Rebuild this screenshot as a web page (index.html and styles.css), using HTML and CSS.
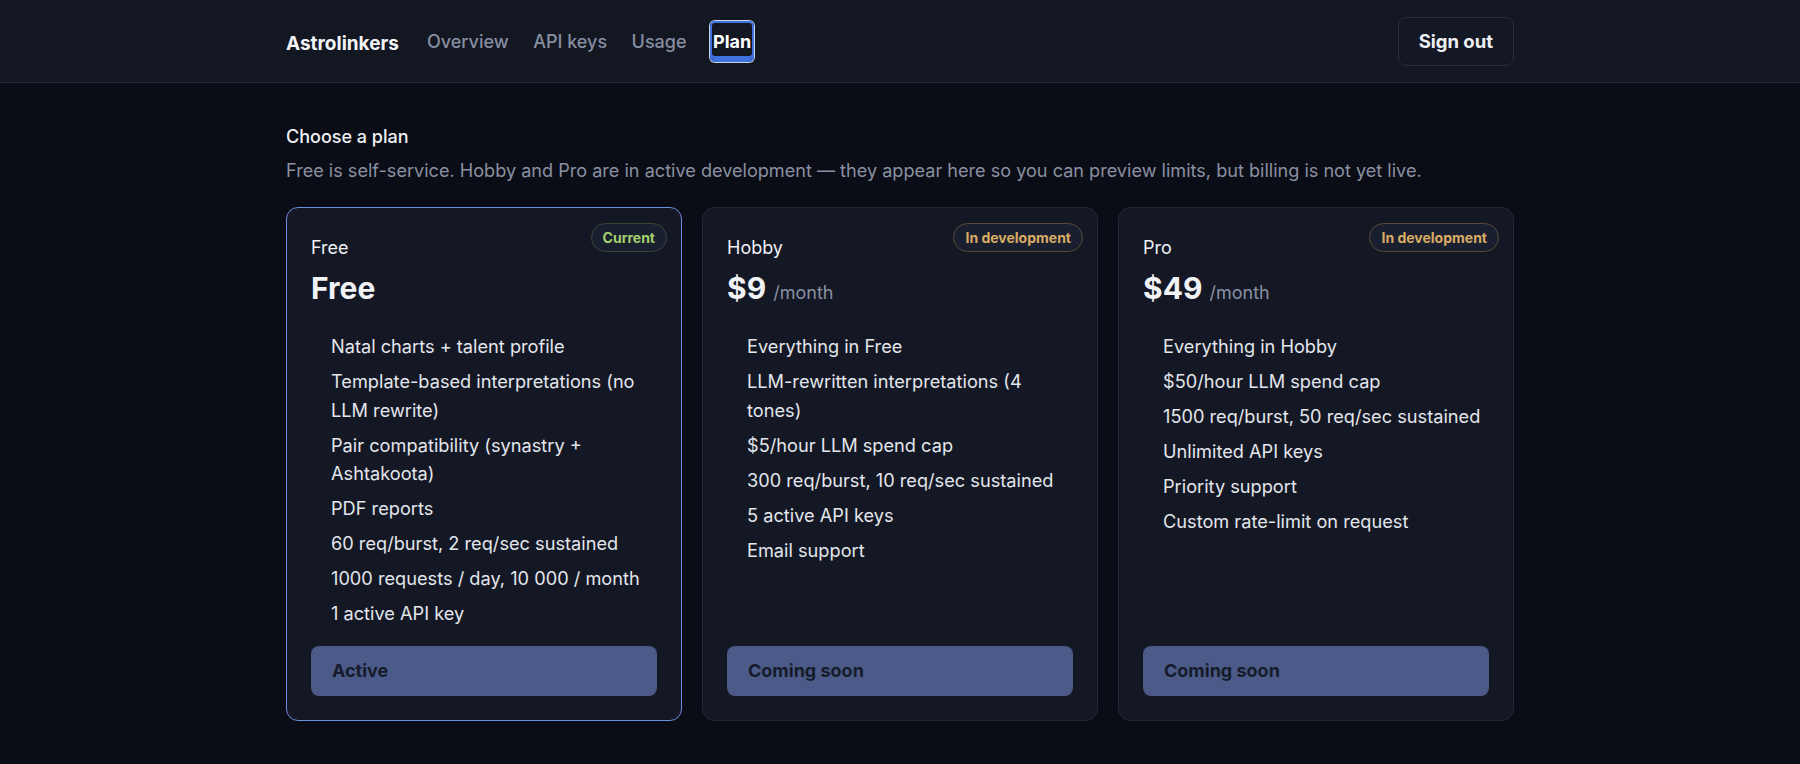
FILE: index.html
```html
<!DOCTYPE html>
<html lang="en">
<head>
    <meta charset="UTF-8">
    <meta name="viewport" content="width=device-width, initial-scale=1.0">
    <title>Plan - Astrolinkers</title>
    <link rel="stylesheet" href="styles.css">
</head>
<body>
    <!-- Top navigation -->
    <header class="topbar">
        <div class="topbar-inner">
            <a href="#" class="brand">Astrolinkers</a>
            <nav class="nav">
                <a href="#" class="nav-link">Overview</a>
                <a href="#" class="nav-link">API keys</a>
                <a href="#" class="nav-link">Usage</a>
                <a href="#" class="nav-link active">Plan</a>
            </nav>
            <button class="signout">Sign out</button>
        </div>
    </header>

    <main class="container">
        <h2 class="page-title">Choose a plan</h2>
        <p class="page-sub">Free is self-service. Hobby and Pro are in active development — they appear here so you can preview limits, but billing is not yet live.</p>

        <div class="plans">
            <!-- Free -->
            <div class="plan-card current">
                <span class="badge badge-current">Current</span>
                <div class="plan-name">Free</div>
                <div class="plan-price">Free</div>
                <ul class="features">
                    <li>Natal charts + talent profile</li>
                    <li>Template-based interpretations (no LLM rewrite)</li>
                    <li>Pair compatibility (synastry + Ashtakoota)</li>
                    <li>PDF reports</li>
                    <li>60 req/burst, 2 req/sec sustained</li>
                    <li>1000 requests / day, 10 000 / month</li>
                    <li>1 active API key</li>
                </ul>
                <button class="plan-btn" disabled>Active</button>
            </div>

            <!-- Hobby -->
            <div class="plan-card">
                <span class="badge badge-dev">In development</span>
                <div class="plan-name">Hobby</div>
                <div class="plan-price">$9 <span class="per">/month</span></div>
                <ul class="features">
                    <li>Everything in Free</li>
                    <li>LLM-rewritten interpretations (4 tones)</li>
                    <li>$5/hour LLM spend cap</li>
                    <li>300 req/burst, 10 req/sec sustained</li>
                    <li>5 active API keys</li>
                    <li>Email support</li>
                </ul>
                <button class="plan-btn" disabled>Coming soon</button>
            </div>

            <!-- Pro -->
            <div class="plan-card">
                <span class="badge badge-dev">In development</span>
                <div class="plan-name">Pro</div>
                <div class="plan-price">$49 <span class="per">/month</span></div>
                <ul class="features">
                    <li>Everything in Hobby</li>
                    <li>$50/hour LLM spend cap</li>
                    <li>1500 req/burst, 50 req/sec sustained</li>
                    <li>Unlimited API keys</li>
                    <li>Priority support</li>
                    <li>Custom rate-limit on request</li>
                </ul>
                <button class="plan-btn" disabled>Coming soon</button>
            </div>
        </div>
    </main>
</body>
</html>
```

FILE: styles.css
```css
body {
    font-family: "Inter", "Noto Sans", sans-serif;
    margin: 0;
    padding: 0;
    background-color: #0a0d16;
    color: #e4e7ee;
}
/* Top bar */
.topbar {
    background-color: #131722;
    border-bottom: 1px solid #222737;
}
.topbar-inner {
    max-width: 1228px;
    margin: 0 auto;
    height: 82px;
    display: flex;
    align-items: center;
}
.brand {
    font-size: 19px;
    font-weight: 700;
    color: #f2f4f8;
    text-decoration: none;
    margin-right: 25px;
    padding-top: 4px;
}
.nav {
    display: flex;
    align-items: center;
    gap: 18.5px;
}
.nav-link {
    font-size: 18px;
    font-weight: 500;
    color: #878ea1;
    text-decoration: none;
    padding: 6px 3px;
    border-radius: 5px;
}
.nav-link.active {
    color: #ffffff;
    font-weight: 700;
    padding: 8px 1px;
    margin-left: 2px;
    border: 2px solid #3f73e0;
    box-shadow: 0 0 0 1px #c9d3ea, inset 0 -4px 0 #3f73e0;
}
.signout {
    margin-left: auto;
    height: 49px;
    padding: 0 20px;
    font-family: inherit;
    font-size: 18.5px;
    font-weight: 700;
    color: #eef0f5;
    background-color: #141824;
    border: 1px solid #272c3c;
    border-radius: 8px;
    cursor: pointer;
}
/* Page body */
.container {
    max-width: 1228px;
    margin: 0 auto;
    padding-top: 42px;
}
.page-title {
    font-size: 18px;
    line-height: 24px;
    font-weight: 500;
    color: #eef0f5;
    margin: 0 0 8px;
}
.page-sub {
    font-size: 18.1px;
    line-height: 26px;
    color: #8a90a2;
    margin: 0 0 24px;
}
/* Plan cards */
.plans {
    display: grid;
    grid-template-columns: repeat(3, 1fr);
    gap: 20px;
}
.plan-card {
    position: relative;
    box-sizing: border-box;
    display: flex;
    flex-direction: column;
    min-height: 513px;
    padding: 28px 24px 24px;
    background-color: #141824;
    border: 1px solid #222838;
    border-radius: 12px;
}
.plan-card.current {
    border-color: #6b8ede;
}
.badge {
    position: absolute;
    top: 15px;
    right: 14px;
    height: 27px;
    line-height: 27px;
    padding: 0 11px;
    font-size: 14px;
    font-weight: 700;
    border-radius: 999px;
    background-color: #1a1f2f;
}
.badge-current {
    color: #a5d06c;
    border: 1px solid #384634;
}
.badge-dev {
    color: #d8ab64;
    border: 1px solid #584a36;
}
.plan-name {
    font-size: 18px;
    line-height: 24px;
    color: #eef0f5;
}
.plan-price {
    height: 36px;
    font-size: 30px;
    line-height: 36px;
    font-weight: 700;
    color: #f0f2f6;
    margin-top: 10px;
}
.plan-price .per {
    font-size: 18px;
    line-height: 1;
    font-weight: 400;
    color: #8a90a2;
}
.features {
    list-style: none;
    margin: 26px 0 18px;
    padding: 0 0 0 20px;
    font-size: 18.2px;
    line-height: 28.5px;
    color: #e3e6ec;
}
.features li {
    margin-bottom: 6.5px;
}
.features li:last-child {
    margin-bottom: 0;
}
.plan-btn {
    margin-top: auto;
    height: 50px;
    padding: 0 21px;
    text-align: left;
    font-family: inherit;
    font-size: 18px;
    font-weight: 700;
    color: #161b29;
    background-color: #4b5a88;
    border: none;
    border-radius: 8px;
}
```
